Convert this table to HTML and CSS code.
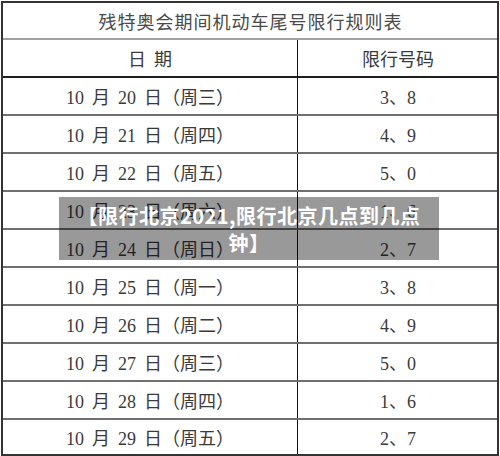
FILE: index.html
```html
<!DOCTYPE html>
<html lang="zh-CN">
<head>
<meta charset="utf-8">
<title>残特奥会期间机动车尾号限行规则表</title>
<link rel="stylesheet" href="styles.css">
</head>
<body>
<div class="page">
  <div class="sheet">
    <div class="row title">残特奥会期间机动车尾号限行规则表</div>
    <div class="row head">
      <div class="c1"><span class="sp">日</span>期</div>
      <div class="c2">限行号码</div>
    </div>
    <div class="row"><div class="c1">10 月 20 日（周三）</div><div class="c2">3、8</div></div>
    <div class="row"><div class="c1">10 月 21 日（周四）</div><div class="c2">4、9</div></div>
    <div class="row"><div class="c1">10 月 22 日（周五）</div><div class="c2">5、0</div></div>
    <div class="row"><div class="c1">10 月 23 日（周六）</div><div class="c2">1、6</div></div>
    <div class="row"><div class="c1">10 月 24 日（周日）</div><div class="c2">2、7</div></div>
    <div class="row"><div class="c1">10 月 25 日（周一）</div><div class="c2">3、8</div></div>
    <div class="row"><div class="c1">10 月 26 日（周二）</div><div class="c2">4、9</div></div>
    <div class="row"><div class="c1">10 月 27 日（周三）</div><div class="c2">5、0</div></div>
    <div class="row"><div class="c1">10 月 28 日（周四）</div><div class="c2">1、6</div></div>
    <div class="row last"><div class="c1">10 月 29 日（周五）</div><div class="c2">2、7</div></div>
  </div>
  <div class="caption">【限行北京2021,限行北京几点到几点钟】</div>
</div>
</body>
</html>
```
FILE: styles.css
```css
html, body {
  margin: 0;
  padding: 0;
  background: #fff;
  overflow: hidden;
}
.page {
  position: relative;
  width: 500px;
  height: 456px;
}
.sheet {
  box-sizing: border-box;
  margin: 1px 0 0 1px;
  width: 498px;
  height: 455px;
  border: 2px solid #333;
  display: flex;
  flex-direction: column;
  font-family: "Liberation Serif", "Noto Sans CJK SC", serif;
  font-size: 18px;
  color: #3a3a3a;
}
.row {
  flex: 0 0 36px;
  display: grid;
  grid-template-columns: 294px 1fr;
  border-bottom: 2px solid #707070;
}
.row.last {
  flex: 1 1 auto;
  border-bottom: none;
}
.row.title {
  flex: 0 0 35px;
  display: flex;
  align-items: center;
  justify-content: center;
  letter-spacing: 1px;
  border-bottom-color: #a0a0a0;
  padding-left: 1px;
  color: #4a4a4a;
}
.row.head {
  border-bottom-color: #1e1e1e;
}
.c1, .c2 {
  display: flex;
  align-items: center;
  justify-content: center;
}
.c1 {
  word-spacing: 3.5px;
}
.c2 {
  border-left: 1px solid #111;
  padding-left: 1px;
}
.sp {
  margin-right: 8px;
}
.caption {
  position: absolute;
  left: 59px;
  top: 196px;
  width: 380px;
  height: 63px;
  box-sizing: border-box;
  padding: 5px 16px 4px;
  background: rgba(0, 0, 0, 0.4);
  color: #fff;
  font-family: "Noto Sans CJK SC", "Noto Sans", sans-serif;
  font-weight: 700;
  font-size: 20px;
  letter-spacing: 0.5px;
  line-height: 27px;
  text-align: center;
}
```
